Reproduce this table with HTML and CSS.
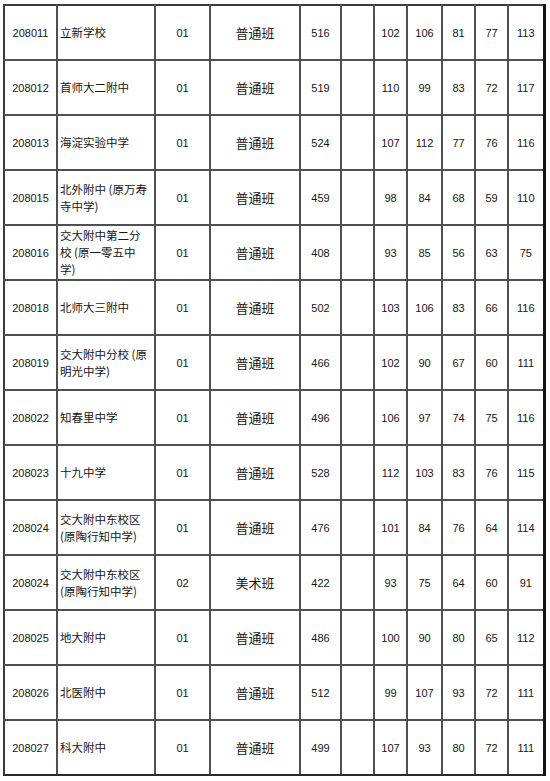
FILE: index.html
```html
<!DOCTYPE html>
<html lang="zh">
<head>
<meta charset="utf-8">
<title>录取分数</title>
<link rel="stylesheet" href="styles.css">
</head>
<body>
<table class="scores">
  <colgroup>
    <col class="c-code"><col class="c-name"><col class="c-cls"><col class="c-type"><col class="c-total"><col class="c-blank">
    <col class="c-n1"><col class="c-n2"><col class="c-n3"><col class="c-n4"><col class="c-n5">
  </colgroup>
  <tbody>
    <tr><td class="num">208011</td><td class="name">立新学校</td><td class="num">01</td><td class="type">普通班</td><td class="num">516</td><td></td><td class="num">102</td><td class="num">106</td><td class="num">81</td><td class="num">77</td><td class="num">113</td></tr>
    <tr><td class="num">208012</td><td class="name">首师大二附中</td><td class="num">01</td><td class="type">普通班</td><td class="num">519</td><td></td><td class="num">110</td><td class="num">99</td><td class="num">83</td><td class="num">72</td><td class="num">117</td></tr>
    <tr><td class="num">208013</td><td class="name">海淀实验中学</td><td class="num">01</td><td class="type">普通班</td><td class="num">524</td><td></td><td class="num">107</td><td class="num">112</td><td class="num">77</td><td class="num">76</td><td class="num">116</td></tr>
    <tr><td class="num">208015</td><td class="name">北外附中 (原万寿<br>寺中学)</td><td class="num">01</td><td class="type">普通班</td><td class="num">459</td><td></td><td class="num">98</td><td class="num">84</td><td class="num">68</td><td class="num">59</td><td class="num">110</td></tr>
    <tr><td class="num">208016</td><td class="name">交大附中第二分<br>校 (原一零五中<br>学)</td><td class="num">01</td><td class="type">普通班</td><td class="num">408</td><td></td><td class="num">93</td><td class="num">85</td><td class="num">56</td><td class="num">63</td><td class="num">75</td></tr>
    <tr><td class="num">208018</td><td class="name">北师大三附中</td><td class="num">01</td><td class="type">普通班</td><td class="num">502</td><td></td><td class="num">103</td><td class="num">106</td><td class="num">83</td><td class="num">66</td><td class="num">116</td></tr>
    <tr><td class="num">208019</td><td class="name">交大附中分校 (原<br>明光中学)</td><td class="num">01</td><td class="type">普通班</td><td class="num">466</td><td></td><td class="num">102</td><td class="num">90</td><td class="num">67</td><td class="num">60</td><td class="num">111</td></tr>
    <tr><td class="num">208022</td><td class="name">知春里中学</td><td class="num">01</td><td class="type">普通班</td><td class="num">496</td><td></td><td class="num">106</td><td class="num">97</td><td class="num">74</td><td class="num">75</td><td class="num">116</td></tr>
    <tr><td class="num">208023</td><td class="name">十九中学</td><td class="num">01</td><td class="type">普通班</td><td class="num">528</td><td></td><td class="num">112</td><td class="num">103</td><td class="num">83</td><td class="num">76</td><td class="num">115</td></tr>
    <tr><td class="num">208024</td><td class="name">交大附中东校区<br>(原陶行知中学)</td><td class="num">01</td><td class="type">普通班</td><td class="num">476</td><td></td><td class="num">101</td><td class="num">84</td><td class="num">76</td><td class="num">64</td><td class="num">114</td></tr>
    <tr><td class="num">208024</td><td class="name">交大附中东校区<br>(原陶行知中学)</td><td class="num">02</td><td class="type">美术班</td><td class="num">422</td><td></td><td class="num">93</td><td class="num">75</td><td class="num">64</td><td class="num">60</td><td class="num">91</td></tr>
    <tr><td class="num">208025</td><td class="name">地大附中</td><td class="num">01</td><td class="type">普通班</td><td class="num">486</td><td></td><td class="num">100</td><td class="num">90</td><td class="num">80</td><td class="num">65</td><td class="num">112</td></tr>
    <tr><td class="num">208026</td><td class="name">北医附中</td><td class="num">01</td><td class="type">普通班</td><td class="num">512</td><td></td><td class="num">99</td><td class="num">107</td><td class="num">93</td><td class="num">72</td><td class="num">111</td></tr>
    <tr><td class="num">208027</td><td class="name">科大附中</td><td class="num">01</td><td class="type">普通班</td><td class="num">499</td><td></td><td class="num">107</td><td class="num">93</td><td class="num">80</td><td class="num">72</td><td class="num">111</td></tr>
  </tbody>
</table>
</body>
</html>
```
FILE: styles.css
```css
html, body {
  margin: 0;
  padding: 0;
  background: #ffffff;
}

body {
  padding: 4px 0 0 3px;
  font-family: "Liberation Sans", "Noto Sans CJK SC", sans-serif;
  color: #161616;
}

.scores {
  border-collapse: collapse;
  table-layout: fixed;
  width: 542px;
  border-top: 2px solid #3c3c3c;
  border-left: 2px solid #3c3c3c;
  border-right: 3px solid #151515;
  border-bottom: 2px solid #2a2a2a;
}

.c-code { width: 53px; }
.c-name { width: 98px; }
.c-cls { width: 55px; }
.c-type { width: 90px; }
.c-total { width: 41px; }
.c-blank { width: 33px; }
.c-n1 { width: 33px; }
.c-n2 { width: 35px; }
.c-n3 { width: 33px; }
.c-n4 { width: 33px; }
.c-n5 { width: 36px; }

.scores td {
  height: 53px;
  padding: 0;
  border: 2px solid #505050;
  vertical-align: middle;
  text-align: center;
  overflow: hidden;
}

.scores tr:first-child td { border-top-color: #3c3c3c; }
.scores td:first-child { border-left-color: #3c3c3c; }
.scores td:last-child { border-right: 3px solid #151515; }
.scores tr:last-child td { border-bottom-color: #2a2a2a; }

.num {
  font-family: "Liberation Sans", sans-serif;
  font-size: 11px;
  white-space: nowrap;
}

.name {
  text-align: left !important;
  padding-left: 2px !important;
  font-family: "Noto Sans CJK SC", sans-serif;
  font-size: 11.5px;
  line-height: 17px;
  white-space: nowrap;
}

.type {
  font-family: "Noto Sans CJK SC", sans-serif;
  font-size: 13px;
}
```
